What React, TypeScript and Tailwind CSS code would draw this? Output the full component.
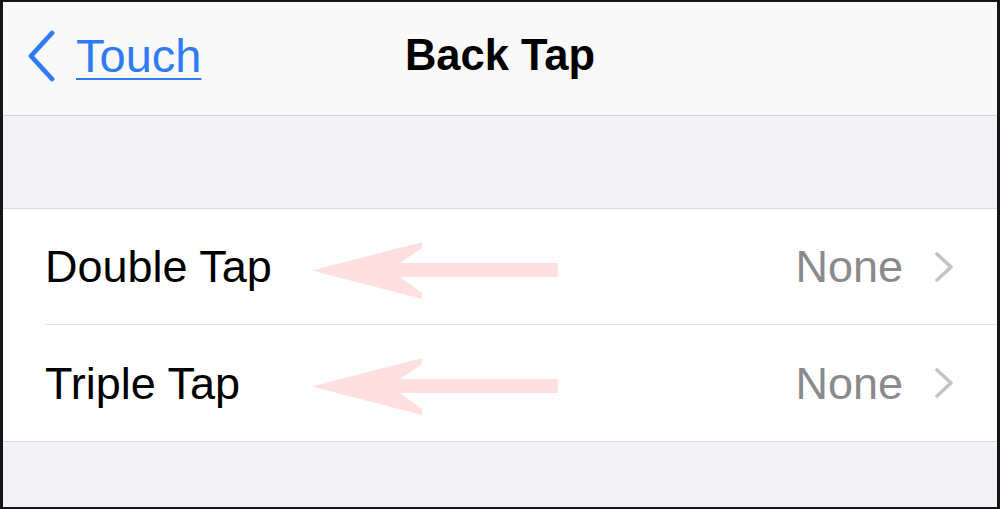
import React from 'react';

const font = { fontFamily: '"Liberation Sans", Arial, sans-serif' };

const rows = [
  { label: 'Double Tap', value: 'None' },
  { label: 'Triple Tap', value: 'None' }
];

const HintArrow: React.FC = () => (
  <svg
    className="absolute left-[267px] top-[33px]"
    width="246"
    height="58"
    viewBox="0 0 246 58"
  >
    <polygon
      points="0,28.5 110,0 110,6 88,21 246,21 246,35 88,35 110,51 110,57"
      fill="#ffdfe0"
    />
  </svg>
);

const App: React.FC = () => {
  return (
    <div
      className="w-[1000px] h-[509px] flex flex-col bg-[#f2f2f7] border-[#161616] border-t-2 border-b-2 border-l-[3px] border-r-[3px] overflow-hidden"
      style={font}
    >
      {/* Nav bar */}
      <div className="h-[114px] shrink-0 bg-[#f9f9f9] border-b border-[#d3d3d7] grid grid-cols-[1fr_auto_1fr] items-center pb-[6px]">
        <a href="#" className="flex items-center gap-[20px] pl-[23px] text-[#2f7bf5]">
          <svg width="30" height="52" viewBox="0 0 30 52" fill="none">
            <path
              d="M26 3 L5 26 L26 49"
              stroke="currentColor"
              strokeWidth="4.8"
              strokeLinecap="round"
              strokeLinejoin="round"
            />
          </svg>
          <span className="text-[47px] leading-none underline decoration-2 underline-offset-[6px]">Touch</span>
        </a>
        <h1 className="text-[43.5px] leading-none font-bold text-black">Back Tap</h1>
        <div />
      </div>

      {/* Spacer */}
      <div className="h-[93px] shrink-0 border-b border-[#d9d9dd]" />

      {/* List */}
      <div className="bg-white pl-[42px] border-b border-[#dcdce0]">
        {rows.map((row, i) => (
          <div
            key={row.label}
            className={`relative h-[116px] flex items-center pr-[43px] ${i < rows.length - 1 ? 'border-b border-[#e3e3e7]' : ''}`}
          >
            <span className="text-[45px] leading-none text-black">{row.label}</span>
            <HintArrow />
            <span className="ml-auto text-[45px] leading-none text-[#8a8a8e]">{row.value}</span>
            <svg className="ml-[31px]" width="20" height="32" viewBox="0 0 20 32" fill="none">
              <path
                d="M3 3 L17 16 L3 29"
                stroke="#c4c4c7"
                strokeWidth="3.6"
                strokeLinecap="round"
                strokeLinejoin="round"
              />
            </svg>
          </div>
        ))}
      </div>

      <div className="flex-1" />
    </div>
  );
};

export default App;
